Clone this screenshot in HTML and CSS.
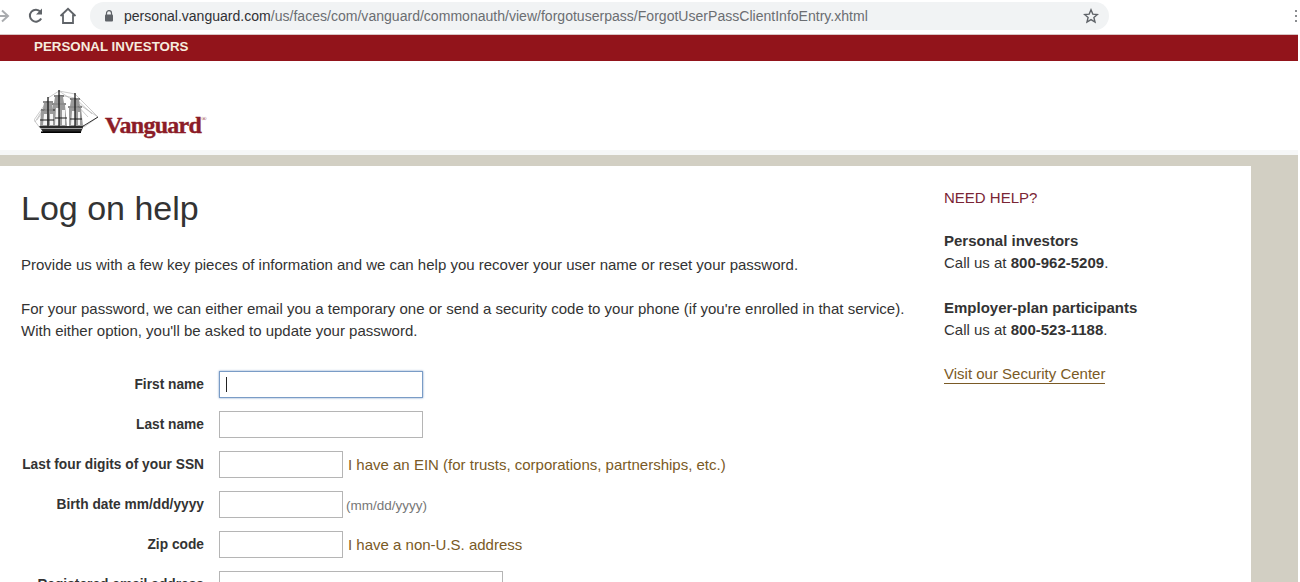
FILE: index.html
```html
<!DOCTYPE html>
<html lang="en">
<head>
<meta charset="utf-8">
<title>Log on help</title>
<link rel="stylesheet" href="styles.css">
</head>
<body>
<div class="page">
  <div class="browser">
    <svg class="ico-back" width="14" height="16" viewBox="0 0 14 16"><path d="M0 8h10M4 2.500l6 5.500-6 5.500" fill="none" stroke="#a9abae" stroke-width="2"/></svg>
    <svg class="ico-reload" width="18" height="18" viewBox="0 0 18 18"><path d="M14.200 11.500A6 6 0 1 1 13.500 4.800" fill="none" stroke="#5f6368" stroke-width="2"/><path d="M15 1.500v6h-6z" fill="#5f6368"/></svg>
    <svg class="ico-home" width="18" height="18" viewBox="0 0 18 18"><path d="M1.500 9 9 1.800 16.500 9M4 7.500V16h10V7.500" fill="none" stroke="#5f6368" stroke-width="1.800"/></svg>
    <div class="omnibox">
      <svg class="ico-lock" width="10" height="12" viewBox="0 0 10 12"><path d="M2.500 5V3.200a2.500 2.500 0 0 1 5 0V5" fill="none" stroke="#5f6368" stroke-width="1.200"/><rect x="1" y="4.500" width="8" height="7" rx="1" fill="#5f6368"/></svg>
      <span class="url"><span class="host">personal.vanguard.com</span>/us/faces/com/vanguard/commonauth/view/forgotuserpass/ForgotUserPassClientInfoEntry.xhtml</span>
      <svg class="ico-star" width="16" height="16" viewBox="0 0 16 16"><path d="M8 1.800l1.800 4.300 4.600.4-3.500 3 1.100 4.500L8 11.600 4 14l1.100-4.500-3.500-3 4.600-.4z" fill="none" stroke="#5f6368" stroke-width="1.400"/></svg>
    </div>
    <div class="kebab"><i></i><i></i><i></i></div>
  </div>
  <div class="redbar">PERSONAL INVESTORS</div>
  <header class="masthead">
    <svg class="ship" width="66" height="46" viewBox="0 0 66 46">
      <g fill="none" stroke="#a8a8a8" stroke-width=".6">
        <path d="M25 1 64 27 50 37M41 4 64 27M41 8 58 24M41 13 54 27M25 1 41 4M25 1 14 8"/>
        <path d="M14 10 0 30 6 38M14 14 3 30M11 16 1 32M25 5 41 8"/>
      </g>
      <g fill="#9a9a9a">
        <path d="M10 13h8l1 6H9zM7 21h13l1 15H6zM21 7h8l1 6H20zM19 15h12l2 21H19zM37 10h8l1 6H36zM35 18h12l2 18H35z"/>
      </g>
      <g fill="#f4f4f4"><path d="M10 24h3v11h-4zM22 18h3v17h-4zM38 21h3v14h-4zM16 24h3v11h-3zM28 20h3v15h-3zM44 22h2v13h-2z"/></g>
      <g stroke="#1a1a1a" fill="none">
        <path d="M14 7v31M25 0v38M41 3v35" stroke-width="1.300"/>
        <path d="M9 12h10M7 20h14M20 6h10M18 14h14M36 9h10M34 17h14M21 28h12M6 30h14M36 29h12" stroke-width="1"/>
        <path d="M46 38 64 27" stroke-width=".9"/>
      </g>
      <path d="M5 36h44l1-1-3 7H9z" fill="#2a2a2a"/>
      <path d="M6 38.500h42" stroke="#d8d8d8" stroke-width=".7"/>
      <path d="M7 41.500h40v1.500H7z" fill="#000"/>
    </svg>
    <span class="wordmark">Vanguard<sup>®</sup></span>
  </header>
  <div class="band">
    <main class="card">
      <section class="content">
        <h1>Log on help</h1>
        <p class="intro">Provide us with a few key pieces of information and we can help you recover your user name or reset your password.</p>
        <p class="intro2">For your password, we can either email you a temporary one or send a security code to your phone (if you're enrolled in that service).<br>With either option, you'll be asked to update your password.</p>
        <form class="form">
          <div class="row"><label>First name</label><span class="field wide focus"><i class="caret"></i></span></div>
          <div class="row"><label>Last name</label><span class="field wide"></span></div>
          <div class="row"><label>Last four digits of your SSN</label><span class="field short"></span><a class="link">I have an EIN (for trusts, corporations, partnerships, etc.)</a></div>
          <div class="row"><label>Birth date mm/dd/yyyy</label><span class="field short"></span><span class="hint">(mm/dd/yyyy)</span></div>
          <div class="row"><label>Zip code</label><span class="field short"></span><a class="link">I have a non-U.S. address</a></div>
          <div class="row"><label>Registered email address</label><span class="field email"></span></div>
        </form>
      </section>
      <aside class="help">
        <h2>NEED HELP?</h2>
        <p><b>Personal investors</b><br>Call us at <b>800-962-5209</b>.</p>
        <p><b>Employer-plan participants</b><br>Call us at <b>800-523-1188</b>.</p>
        <a class="security">Visit our Security Center</a>
      </aside>
    </main>
  </div>
</div>
</body>
</html>
```
FILE: styles.css
```css
* { box-sizing: border-box; }
html, body { margin: 0; height: 582px; overflow: hidden; background: #fff; }
body { font-family: "Liberation Sans", Arial, sans-serif; color: #333; }
.page { width: 1298px; height: 582px; overflow: hidden; }

.browser { height: 35px; display: flex; align-items: flex-start; position: relative; border-bottom: 1px solid #d9c4c4; }
.ico-back { margin: 8px 0 0 -2px; }
.ico-reload { margin: 7px 0 0 15px; }
.ico-home { margin: 7px 0 0 14px; }
.omnibox { width: 1019px; height: 28px; margin: 2px 0 0 13px; background: #f1f3f4; border-radius: 14px; display: flex; align-items: center; padding: 0 10px 0 14px; }
.ico-lock { flex: none; }
.url { font-size: 14.05px; margin-left: 10px; color: #6b6e72; flex: 1; white-space: nowrap; }
.host { color: #303134; }
.kebab { position: absolute; right: 1px; top: 10px; display: flex; flex-direction: column; gap: 3px; }
.kebab i { width: 2px; height: 2px; background: #8a8d90; display: block; }

.redbar { height: 26px; background: #92141b; color: #f6ecdf; font-size: 13.35px; font-weight: bold; line-height: 23px; padding-left: 34px; }
.masthead { height: 94px; padding: 27px 0 0 34px; display: flex; align-items: flex-start; border-bottom: 5px solid #f6f7f7; }
.ship { flex: none; margin-top: 2px; }
.wordmark { font-family: "Liberation Serif", serif; font-weight: bold; font-size: 24px; color: #8c1c28; -webkit-text-stroke: .4px #8c1c28; margin: 24px 0 0 5px; letter-spacing: -.7px; line-height: 26px; }
.wordmark sup { font-size: 7px; font-weight: normal; vertical-align: 12px; line-height: 0; letter-spacing: 0; -webkit-text-stroke: 0; }

.band { background: #d2cfc3; height: 427px; padding-top: 11px; }
.card { width: 1251px; height: 416px; background: #fff; display: flex; }
.content { width: 944px; padding: 22px 0 0 21px; }
h1 { font-size: 34px; font-weight: normal; margin: 0; line-height: 40px; color: #333; }
.content p { font-size: 15px; line-height: 22px; margin: 0; }
.intro { padding-top: 26px; }
.intro2 { padding-top: 22px; }
.form { display: flex; flex-direction: column; gap: 13px; padding-top: 29px; }
.row { height: 27px; display: flex; align-items: center; }
.row label { width: 183px; margin-right: 15px; text-align: right; font-size: 13.75px; font-weight: bold; white-space: nowrap; }
.field { display: block; height: 27px; border: 1px solid #b5b5b5; background: #fff; flex: none; }
.wide { width: 204px; }
.short { width: 124px; }
.email { width: 284px; }
.focus { border-color: #7a9cc6; box-shadow: 0 0 2px #7a9cc6; padding: 5px 0 0 6px; }
.caret { display: block; width: 1px; height: 15px; background: #222; }
.link { font-size: 15px; color: #7a5a26; margin-left: 5px; }
.hint { font-size: 13.5px; color: #777; margin-left: 3px; padding-top: 2px; }

.help { flex: 1; padding-top: 21px; font-size: 15px; line-height: 22px; }
h2 { font-size: 15px; font-weight: normal; color: #7a2535; margin: 0; line-height: 22px; }
.help p { margin: 21px 0 0; }
.help p + p { margin-top: 23px; }
.security { display: inline-block; margin-top: 24px; color: #7a5a26; line-height: 18px; border-bottom: 1px solid #7a5a26; }
```
